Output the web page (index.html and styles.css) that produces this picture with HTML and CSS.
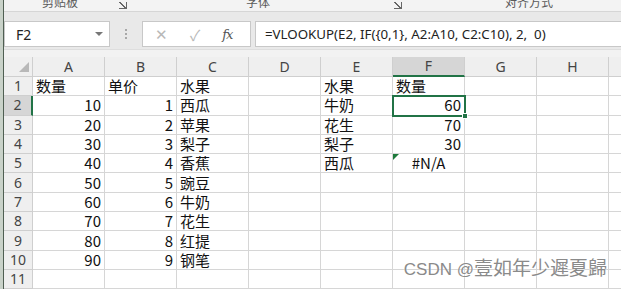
FILE: index.html
```html
<!DOCTYPE html>
<html lang="zh-CN">
<head>
    <meta charset="UTF-8">
    <title>VLOOKUP</title>
    <link rel="stylesheet" href="styles.css">
</head>
<body>
<div class="screen">
    <div class="edge"></div>
    <div class="app">
        <div class="ribbon">
            <span class="grp g1">剪贴板</span>
            <span class="launch l1"></span>
            <span class="grp g2">字体</span>
            <span class="launch l2"></span>
            <span class="grp g3">对齐方式</span>
        </div>

        <div class="fbar">
            <div class="namebox"><span>F2</span><span class="caret"></span></div>
            <div class="grip"></div>
            <div class="btns">
                <span class="cancel">✕</span>
                <span class="enter">✓</span>
                <span class="fx">fx</span>
            </div>
            <div class="formula">=VLOOKUP(E2, IF({0,1}, A2:A10, C2:C10), 2,&nbsp; 0)</div>
        </div>
        <div class="strip"></div>

        <table class="grid">
            <colgroup>
                <col class="c-head">
                <col class="c-col"><col class="c-col"><col class="c-col"><col class="c-col">
                <col class="c-col"><col class="c-col"><col class="c-col"><col class="c-col">
                <col class="c-rest">
            </colgroup>
            <tr class="hdr">
                <th class="corner"><span class="tri"></span></th>
                <th>A</th><th>B</th><th>C</th><th>D</th><th>E</th><th class="sel">F</th><th>G</th><th>H</th><th></th>
            </tr>
            <tr><th>1</th><td>数量</td><td>单价</td><td>水果</td><td></td><td>水果</td><td>数量</td><td></td><td></td><td></td></tr>
            <tr><th class="sel">2</th><td class="n">10</td><td class="n">1</td><td>西瓜</td><td></td><td>牛奶</td><td class="n active">60<span class="handle"></span></td><td></td><td></td><td></td></tr>
            <tr><th>3</th><td class="n">20</td><td class="n">2</td><td>苹果</td><td></td><td>花生</td><td class="n">70</td><td></td><td></td><td></td></tr>
            <tr><th>4</th><td class="n">30</td><td class="n">3</td><td>梨子</td><td></td><td>梨子</td><td class="n">30</td><td></td><td></td><td></td></tr>
            <tr><th>5</th><td class="n">40</td><td class="n">4</td><td>香蕉</td><td></td><td>西瓜</td><td class="err"><span class="flag"></span>#N/A</td><td></td><td></td><td></td></tr>
            <tr><th>6</th><td class="n">50</td><td class="n">5</td><td>豌豆</td><td></td><td></td><td></td><td></td><td></td><td></td></tr>
            <tr><th>7</th><td class="n">60</td><td class="n">6</td><td>牛奶</td><td></td><td></td><td></td><td></td><td></td><td></td></tr>
            <tr><th>8</th><td class="n">70</td><td class="n">7</td><td>花生</td><td></td><td></td><td></td><td></td><td></td><td></td></tr>
            <tr><th>9</th><td class="n">80</td><td class="n">8</td><td>红提</td><td></td><td></td><td></td><td></td><td></td><td></td></tr>
            <tr><th>10</th><td class="n">90</td><td class="n">9</td><td>钢笔</td><td></td><td></td><td></td><td></td><td></td><td></td></tr>
            <tr><th>11</th><td></td><td></td><td></td><td></td><td></td><td></td><td></td><td></td><td></td></tr>
        </table>
    </div>
    <div class="mark"><span class="mark-en">CSDN @</span>壹如年少遲夏歸</div>
</div>
</body>
</html>
```

FILE: styles.css
```css
* {
    margin: 0;
    padding: 0;
    box-sizing: border-box;
}

html, body {
    width: 621px;
    height: 289px;
    overflow: hidden;
    background: #ffffff;
}

.screen {
    position: relative;
    display: flex;
    width: 621px;
    height: 289px;
    overflow: hidden;
    font-family: "Noto Sans", "Noto Sans CJK SC", sans-serif;
}

.edge {
    width: 4px;
    flex: none;
    background: #c9d2c9;
    border-right: 1px solid #4f5f52;
}

.app {
    flex: 1;
    display: flex;
    flex-direction: column;
    min-width: 0;
}

/* ribbon, only the lower edge shows */
.ribbon {
    height: 12px;
    flex: none;
    display: flex;
    align-items: flex-end;
    overflow: hidden;
    background: #f3f3f3;
    border-bottom: 1px solid #d6d6d6;
    color: #5a5a5a;
    font-family: "Noto Sans CJK SC", sans-serif;
    font-size: 12px;
    line-height: 16px;
}

.grp {
    margin-bottom: 1px;
}

.g1 { margin-left: 38px; }
.g2 { margin-left: 119px; }
.g3 { margin-left: 103px; }

.launch {
    width: 8px;
    height: 7px;
    margin-bottom: 2px;
    border-right: 1px solid #666;
    border-bottom: 1px solid #666;
    background: linear-gradient(45deg, transparent 45%, #666 45%, #666 58%, transparent 58%);
}

.l1 { margin-left: 41px; }
.l2 { margin-left: 124px; }

/* formula bar */
.fbar {
    height: 37px;
    flex: none;
    display: flex;
    align-items: flex-start;
    padding-top: 9px;
    background: #e9e9e9;
}

.strip {
    height: 8px;
    flex: none;
    background: #f2f2f2;
    border-top: 1px solid #dedede;
}

.namebox {
    width: 106px;
    height: 26px;
    display: flex;
    align-items: center;
    justify-content: space-between;
    padding: 0 6px 0 11px;
    background: #fff;
    border: 1px solid #c8c8c8;
    color: #222;
    font-size: 14px;
}

.caret {
    width: 0;
    height: 0;
    border-left: 4px solid transparent;
    border-right: 4px solid transparent;
    border-top: 4px solid #777;
}

.grip {
    width: 2px;
    height: 10px;
    margin: 8px 15px 0 15px;
    border-left: 2px dotted #a8a8a8;
}

.btns {
    width: 109px;
    height: 26px;
    display: flex;
    align-items: center;
    background: #fff;
    border: 1px solid #c8c8c8;
    color: #b8b8b8;
    font-size: 15px;
}

.cancel { margin-left: 12px; }
.enter { margin-left: 22px; }

.fx {
    margin-left: 22px;
    color: #555;
    font-family: "DejaVu Serif", serif;
    font-style: italic;
    font-size: 13px;
    letter-spacing: -1px;
}

.formula {
    flex: 1;
    height: 26px;
    margin-left: 4px;
    padding-left: 9px;
    background: #fff;
    border: 1px solid #c8c8c8;
    border-right: none;
    color: #222;
    font-size: 13.3px;
    line-height: 24px;
    white-space: nowrap;
}

/* sheet */
.grid {
    table-layout: fixed;
    border-collapse: separate;
    border-spacing: 0;
    width: 630px;
    font-family: "Noto Sans CJK SC", sans-serif;
    font-size: 15px;
    color: #111;
}

.c-head { width: 29px; }
.c-col { width: 72px; }
.c-rest { width: 36px; }

.grid th, .grid td {
    height: 19.3px;
    padding: 0 3px;
    border-right: 1px solid #d6d6d6;
    border-bottom: 1px solid #d6d6d6;
    line-height: 18px;
    white-space: nowrap;
    font-weight: normal;
    text-align: left;
}

.grid th {
    background: #efefef;
    color: #444;
    text-align: center;
    border-color: #cfcfcf;
    font-family: "Noto Sans", sans-serif;
    font-size: 14px;
}

.grid .hdr th {
    height: 20px;
}

.grid th.sel {
    background: #d6d6d6;
}

.grid .hdr th.sel {
    border-bottom: 2px solid #217346;
}

.grid tr th.sel:first-child {
    border-right: 2px solid #217346;
}

.corner {
    position: relative;
}

.tri {
    position: absolute;
    right: 3px;
    bottom: 4px;
    width: 0;
    height: 0;
    border-left: 10px solid transparent;
    border-bottom: 10px solid #b8b8b8;
}

.grid td.n {
    text-align: right;
}

.grid td.err {
    position: relative;
    text-align: center;
}

.flag {
    position: absolute;
    left: 0;
    top: 0;
    width: 0;
    height: 0;
    border-top: 6px solid #1e7a3c;
    border-right: 6px solid transparent;
}

.grid td.active {
    position: relative;
    outline: 2px solid #217346;
    outline-offset: -1px;
}

.handle {
    position: absolute;
    right: -4px;
    bottom: -4px;
    width: 6px;
    height: 6px;
    background: #217346;
    border: 1px solid #fff;
}

/* watermark */
.mark {
    position: absolute;
    right: 14px;
    bottom: 9px;
    color: #8a8a8a;
    font-family: "Noto Sans CJK SC", sans-serif;
    font-size: 19px;
    line-height: 20px;
    text-shadow: 0 0 2px #fff;
}

.mark-en {
    font-family: "Liberation Sans", sans-serif;
    font-size: 17px;
}
```
